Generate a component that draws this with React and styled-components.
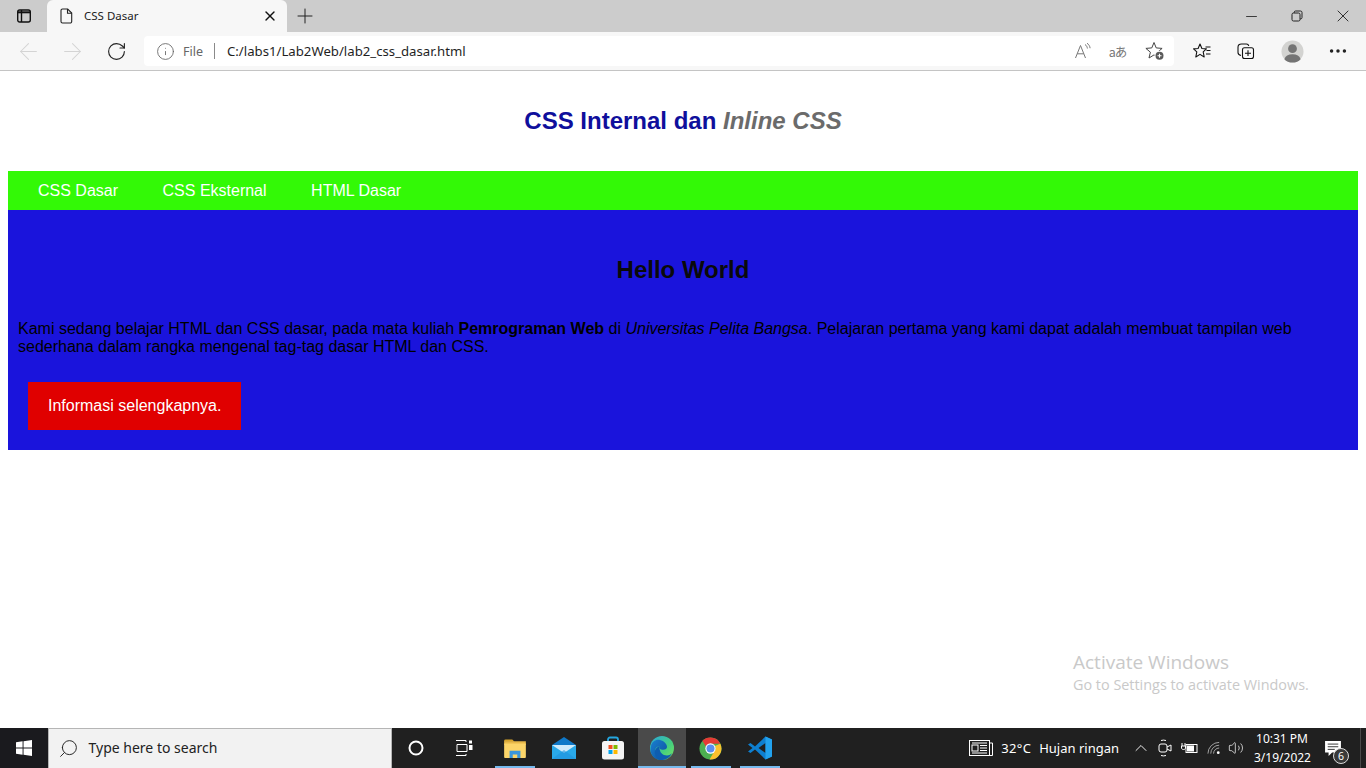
import React from "react";
import styled, { createGlobalStyle } from "styled-components";
import {
  ArrowLeft,
  ArrowRight,
  RotateCw,
  Info,
  X,
  Plus,
  Minus,
  MoreHorizontal,
  Search,
  ChevronUp,
  Volume2,
} from "lucide-react";

const GlobalStyle = createGlobalStyle`
  html, body {
    margin: 0;
    padding: 0;
    height: 100%;
    overflow: hidden;
    background: #fff;
  }
`;

const Screen = styled.div`
  width: 1366px;
  height: 768px;
  display: flex;
  flex-direction: column;
  position: relative;
  overflow: hidden;
  font-family: "Open Sans", "Noto Sans", sans-serif;
`;

/* browser top */
const TabStrip = styled.div`
  height: 32px;
  background: #cccccc;
  display: flex;
  align-items: flex-end;
`;
const TabSide = styled.div`
  width: 47px;
  height: 32px;
  display: flex;
  align-items: center;
  justify-content: center;
`;
const Tab = styled.div`
  width: 240px;
  height: 32px;
  background: #f7f7f7;
  border-radius: 6px 6px 0 0;
  display: flex;
  align-items: center;
  padding: 0 9px 0 13px;
  box-sizing: border-box;
`;
const TabTitle = styled.span`
  flex: 1;
  margin-left: 10px;
  padding-bottom: 2px;
  font-size: 11.5px;
  color: #222;
  font-family: "Noto Sans", sans-serif;
`;
const NewTab = styled.div`
  width: 36px;
  height: 32px;
  display: flex;
  align-items: center;
  justify-content: center;
`;
const WindowControls = styled.div`
  margin-left: auto;
  display: flex;
  height: 32px;
`;
const WinBtn = styled.div`
  width: 46px;
  height: 32px;
  display: flex;
  align-items: center;
  justify-content: center;
`;
const Toolbar = styled.div`
  height: 38px;
  background: #f7f7f7;
  border-bottom: 1px solid #c4c4c4;
  display: flex;
  align-items: center;
  padding-left: 6px;
  box-sizing: content-box;
`;
const NavBtn = styled.div`
  width: 44px;
  height: 32px;
  display: flex;
  align-items: center;
  justify-content: center;
`;
const AddressBar = styled.div`
  width: 1030px;
  height: 30px;
  margin-left: 6px;
  background: #fff;
  border-radius: 4px;
  display: flex;
  align-items: center;
  padding-left: 12px;
  box-sizing: border-box;
`;
const FileLabel = styled.span`
  margin-left: 8px;
  font-size: 12.5px;
  color: #666;
  font-family: "Noto Sans", sans-serif;
`;
const Divider = styled.span`
  width: 1px;
  height: 16px;
  margin: 0 12px 0 11px;
  background: #8a8a8a;
`;
const Url = styled.span`
  flex: 1;
  font-size: 13.2px;
  color: #1f1f1f;
  font-family: "Noto Sans", sans-serif;
`;
const AddressIcons = styled.div`
  display: flex;
  align-items: center;
  padding-right: 1px;
`;
const AddrIcon = styled.div`
  width: 36px;
  height: 30px;
  display: flex;
  align-items: center;
  justify-content: center;
`;
const TranslateGlyph = styled.span`
  font-family: "Noto Sans CJK JP", "Noto Sans", sans-serif;
  font-size: 12.5px;
  letter-spacing: -1px;
  color: #777;
  padding-right: 3px;
`;
const ToolIcons = styled.div`
  display: flex;
  align-items: center;
  padding-left: 6px;
`;
const ToolIcon = styled.div`
  width: ${(p) => p.$w || 44}px;
  height: 32px;
  display: flex;
  align-items: center;
  justify-content: center;
`;

/* page */
const Viewport = styled.div`
  flex: 1;
  padding: 0 8px;
  font-family: "Liberation Sans", Arial, sans-serif;
  font-size: 16px;
  color: #000;
`;
const Header = styled.header`
  height: 100px;
  display: flex;
  align-items: center;
  justify-content: center;
`;
const Title = styled.h1`
  margin: 0;
  font-size: 24px;
  font-weight: bold;
  color: #0f0f9c;
  i {
    color: #6b6b6b;
  }
`;
const Nav = styled.nav`
  height: 39px;
  background: #33f906;
  display: flex;
  align-items: center;
  padding-left: 7.75px;
`;
const NavLink = styled.a`
  color: #fff;
  padding: 0 22.25px;
  line-height: 39px;
`;
const Main = styled.main`
  height: 240px;
  background: #1a14dc;
  padding: 1px 10px 0;
  box-sizing: border-box;
`;
const Hello = styled.h2`
  margin: 45px 0 0;
  text-align: center;
  font-size: 24px;
  line-height: 27px;
  color: #0a0a0a;
`;
const Paragraph = styled.p`
  margin: 37px 0 0;
  line-height: 18px;
`;
const RedButton = styled.a`
  display: inline-block;
  margin: 26px 0 0 10px;
  padding: 0 20px;
  line-height: 48px;
  background: #e00000;
  color: #fff;
`;
const Watermark = styled.div`
  position: absolute;
  left: 1073px;
  top: 650px;
  color: #c9c9c9;
  font-family: "Open Sans", sans-serif;
  font-size: 14.4px;
  line-height: 19px;
  div:first-child {
    font-size: 19px;
    line-height: 25px;
  }
`;

/* taskbar */
const Taskbar = styled.div`
  height: 40px;
  background: #202020;
  display: flex;
  align-items: stretch;
  color: #fff;
`;
const StartBtn = styled.div`
  width: 48px;
  display: flex;
  align-items: center;
  justify-content: center;
  background: #1a1a1e;
`;
const SearchBox = styled.div`
  width: 344px;
  background: #f2f2f2;
  border: 1px solid #b5b5b5;
  border-bottom: none;
  box-sizing: border-box;
  display: flex;
  align-items: center;
  padding-left: 9px;
  color: #222;
  font-size: 14px;
  font-family: "Noto Sans", sans-serif;
  span {
    margin-left: 9.5px;
    padding-bottom: 2px;
  }
`;
const TaskIcon = styled.div`
  width: ${(p) => p.$w || 49}px;
  margin-left: ${(p) => p.$gap || 0}px;
  display: flex;
  align-items: center;
  justify-content: center;
  position: relative;
  background: ${(p) => (p.$active ? "#4a4a4a" : "transparent")};
`;
const RunningBar = styled.span`
  position: absolute;
  bottom: 0;
  left: ${(p) => p.$inset}px;
  right: ${(p) => p.$inset}px;
  height: 2px;
  background: #76b9ed;
`;
const Tray = styled.div`
  margin-left: auto;
  display: flex;
  align-items: center;
  padding-right: 10px;
  position: relative;
  font-family: "Noto Sans", sans-serif;
`;
const DesktopEdge = styled.span`
  position: absolute;
  right: 5px;
  top: 0;
  bottom: 0;
  width: 1px;
  background: #4a4a4a;
`;
const Weather = styled.div`
  display: flex;
  align-items: center;
  font-size: 13px;
  gap: 8px;
  margin-right: 9px;
`;
const Temp = styled.span`
  width: 30px;
  letter-spacing: 0.4px;
  white-space: nowrap;
`;
const TrayIcon = styled.div`
  width: ${(p) => p.$w || 25}px;
  display: flex;
  align-items: center;
  justify-content: center;
`;
const Clock = styled.div`
  width: 56px;
  margin-left: 10px;
  font-size: 12px;
  line-height: 19px;
  text-align: center;
  white-space: nowrap;
`;
const Notify = styled.div`
  width: 46px;
  height: 40px;
  display: flex;
  align-items: center;
  justify-content: center;
  position: relative;
`;
const NotifyBadge = styled.span`
  position: absolute;
  left: 23px;
  top: 20px;
  width: 14px;
  height: 14px;
  border-radius: 50%;
  background: #3a3a3a;
  border: 1px solid #ddd;
  font-size: 10.5px;
  line-height: 14px;
  text-align: center;
  color: #fff;
`;

const TabsIcon = () => (
  <svg width="16" height="16" viewBox="0 0 16 16" fill="none" stroke="#111" strokeWidth="1.4">
    <rect x="1.700" y="2" width="12.600" height="12" rx="2" />
    <path d="M5.500 2v12" />
    <path d="M1.700 4.300h12.600" strokeWidth="2" />
  </svg>
);
const DocIcon = () => (
  <svg width="14" height="16" viewBox="0 0 14 16" fill="none" stroke="#222" strokeWidth="1.1">
    <path d="M2.500 1h5.200l4 4v8.500a1.500 1.500 0 0 1-1.500 1.500H2.500A1.500 1.500 0 0 1 1 13.500v-11A1.500 1.500 0 0 1 2.500 1z" />
    <path d="M7.500 1v4.200h4.200" />
  </svg>
);
const RestoreIcon = () => (
  <svg width="12" height="12" viewBox="0 0 12 12" fill="none" stroke="#222" strokeWidth="1">
    <rect x="1" y="3" width="8" height="8" rx="1.500" />
    <path d="M3.200 3V2.400A1.400 1.400 0 0 1 4.600 1h4.900A1.500 1.500 0 0 1 11 2.500v5a1.400 1.400 0 0 1-1.400 1.400H9" />
  </svg>
);
const ReadAloud = () => (
  <svg width="18" height="18" viewBox="0 0 18 18" fill="none" stroke="#777" strokeWidth="1">
    <path d="M1.500 16 6.500 3.500 11.500 16M3.300 11.800h6.400" />
    <path d="M11 2.500c1.500 1 2.200 2.300 2.400 4M13 1.200c1.800 1.200 2.900 3 3.100 5" />
  </svg>
);
const StarPlus = () => (
  <svg width="20" height="20" viewBox="0 0 20 20">
    <path
      d="M9 1.500 11.200 6.900 17.100 7.400 12.600 11.200 14 17 9 13.900 4 17 5.400 11.200.9 7.400 6.800 6.900z"
      fill="none"
      stroke="#444"
      strokeWidth="1"
      strokeLinejoin="round"
    />
    <circle cx="14.500" cy="14.800" r="5" fill="#fff" />
    <circle cx="14.500" cy="14.800" r="4" fill="#5a5a5a" />
    <path d="M14.500 12.800v4M12.500 14.800h4" stroke="#fff" strokeWidth="1.100" />
  </svg>
);
const FavList = () => (
  <svg width="18" height="18" viewBox="0 0 18 18" fill="none" stroke="#111" strokeWidth="1.100" strokeLinejoin="round">
    <path d="M7 2 8.900 6.500 13.400 6.900 10.200 9.800 11.200 15 7 12.400 2.800 15 3.800 9.800.6 6.900 5.100 6.500z" />
    <path d="M12.500 5h5M13.500 8.500h4M13 12h4.500" />
  </svg>
);
const Collections = () => (
  <svg width="18" height="18" viewBox="0 0 18 18" fill="none" stroke="#111" strokeWidth="1.100">
    <path d="M4 13.500C2 13 1 12 1 10.500V5.200C1 3 2.300 2 4.500 2h5c1.300 0 2 .7 2.300 2" />
    <rect x="5.500" y="5.800" width="11" height="10.700" rx="2" />
    <path d="M11 8.300v5.700M8 11.200h6" />
  </svg>
);
const Avatar = () => (
  <svg width="23" height="23" viewBox="0 0 24 24">
    <circle cx="12" cy="12" r="11.500" fill="#d3d3d1" />
    <circle cx="12" cy="9" r="4.600" fill="#747474" />
    <path d="M3.500 20c1-3.500 4-5.200 8.500-5.200s7.500 1.700 8.500 5.200c-2 2.400-5 3.500-8.500 3.500s-6.500-1.100-8.500-3.500z" fill="#747474" />
  </svg>
);
const WindowsLogo = () => (
  <svg width="16" height="16" viewBox="0 0 17 17" fill="#fff">
    <path d="M0 2.500 7 1.400v6.600H0zM8 1.300 17 0v8H8zM0 9h7v6.600L0 14.500zM8 9h9v8l-9-1.300z" />
  </svg>
);
const CortanaRing = () => (
  <svg width="16" height="16" viewBox="0 0 16 16" fill="none" stroke="#fff" strokeWidth="2">
    <circle cx="8" cy="8" r="6.500" />
  </svg>
);
const TaskView = () => (
  <svg width="18" height="16" viewBox="0 0 18 16" fill="none" stroke="#fff" strokeWidth="1">
    <path d="M1 .5h10v1.500M1 15.500h10V14M2 4.500h10v7H2z" />
    <rect x="14.500" y="1" width="2" height="2" fill="#fff" />
    <rect x="14.500" y="5.500" width="2.500" height="4" fill="#fff" />
  </svg>
);
const Explorer = () => (
  <svg width="22" height="19" viewBox="0 0 24 21">
    <path d="M0 2A1.500 1.500 0 0 1 1.500.5H9L11.500 3H0z" fill="#d8a52c" />
    <rect x="0" y="2.500" width="24" height="4" fill="#e9b949" />
    <path d="M0 5h24v15a1 1 0 0 1-1 1H1a1 1 0 0 1-1-1z" fill="#fcd569" />
    <path d="M6 21v-8h12v8h-3.500v-4h-5v4z" fill="#3a96dd" />
  </svg>
);
const Mail = () => (
  <svg width="24" height="22" viewBox="0 0 24 22">
    <path d="M0 8 12 0l12 8v14H0z" fill="#0f78c8" />
    <path d="M0 8h24v14H0z" fill="#29a9ea" />
    <path d="M0 8l12 8 12-8z" fill="#cfeafa" />
    <path d="M0 22 12 13l12 9z" fill="#1f93dd" opacity="0.6" />
  </svg>
);
const Store = () => (
  <svg width="24" height="24" viewBox="0 0 24 24">
    <path d="M7 7V3.500A2 2 0 0 1 9 1.500h6a2 2 0 0 1 2 2V7" fill="none" stroke="#25a7e0" strokeWidth="1.800" />
    <rect x="1" y="5" width="22" height="18.500" rx="2.500" fill="#f4f4f4" />
    <rect x="7.500" y="9" width="4" height="4" fill="#f25022" />
    <rect x="12.500" y="9" width="4" height="4" fill="#7fba00" />
    <rect x="7.500" y="14" width="4" height="4" fill="#00a4ef" />
    <rect x="12.500" y="14" width="4" height="4" fill="#ffb900" />
  </svg>
);
const Edge = () => (
  <svg width="24" height="24" viewBox="0 0 24 24">
    <defs>
      <linearGradient id="edgeA" x1="0" y1="0" x2="1" y2="1">
        <stop offset="0" stopColor="#2aa7dc" />
        <stop offset="0.6" stopColor="#45d07e" />
        <stop offset="1" stopColor="#7de25e" />
      </linearGradient>
      <linearGradient id="edgeB" x1="0" y1="0" x2="1" y2="1">
        <stop offset="0" stopColor="#1a7fd0" />
        <stop offset="1" stopColor="#0c4f9c" />
      </linearGradient>
    </defs>
    <circle cx="12" cy="12" r="12" fill="url(#edgeA)" />
    <path d="M1 10c1-4.500 5-7 9-6 4 .8 7 4 7 7 0 1.500-1.600 3-4.500 2.800C10 13.500 9 12 9.500 10.500 5 10.500 4 15 6 19c1.500 3 5 5 9 4.600-5 2-12-.5-14-6.600-.7-2.200-.6-4.800 0-7z" fill="url(#edgeB)" />
    <path d="M9.500 12c0 4 3 7.500 7.500 7.500 2 0 4-1 5-2.500-1.500 4-5.500 7-10 7-2 0-5-1-6.500-4.500C3.500 15 6 11 9.500 10.500z" fill="#0e5db0" />
  </svg>
);
const Chrome = () => (
  <svg width="23" height="23" viewBox="0 0 24 24">
    <circle cx="12" cy="12" r="11.500" fill="#4caf50" />
    <path d="M12 .5A11.500 11.500 0 0 1 22.200 7H12a5 5 0 0 0-4.700 3.300L3.500 4A11.500 11.500 0 0 1 12 .5z" fill="#e53935" />
    <path d="M22.200 7A11.500 11.500 0 0 1 11 23.500l4.700-8A5 5 0 0 0 16.500 9.500z" fill="#fbc02d" />
    <circle cx="12" cy="12" r="5.400" fill="#fff" />
    <circle cx="12" cy="12" r="4.200" fill="#5b8def" />
  </svg>
);
const VSCode = () => (
  <svg width="24" height="24" viewBox="0 0 24 24">
    <path d="M17.500.5 24 3.500v17l-6.500 3L7 13.500l-4.500 3.500L0 15.500 4.500 12 0 8.500 2.500 7 7 10.500z" fill="#0e7fd0" />
    <path d="M17.500 7 10.500 12l7 5z" fill="#202020" />
    <path d="M17.500.5 24 3.500v17l-6.500 3z" fill="#22a2ee" />
  </svg>
);
const NewsIcon = () => (
  <svg width="24" height="16" viewBox="0 0 24 16" fill="none" stroke="#fff" strokeWidth="1">
    <rect x="0.500" y="0.500" width="20" height="15" />
    <path d="M20.500 3h3v12.500h-3" />
    <rect x="3" y="5" width="6" height="6" />
    <path d="M3 3h15M11 5.500h7M11 8h7M11 10.500h7M3 13h15" />
  </svg>
);
const MeetIcon = () => (
  <svg width="14" height="18" viewBox="0 0 14 18" fill="none" stroke="#fff" strokeWidth="1">
    <path d="M3 1.500a8 8 0 0 1 5 0M3 16.500a8 8 0 0 0 5 0" />
    <rect x="1" y="5" width="8" height="8" rx="2" />
    <path d="M9 8l4-2v6l-4-2" />
  </svg>
);
const PowerIcon = () => (
  <svg width="17" height="12" viewBox="0 0 17 12" fill="none" stroke="#fff" strokeWidth="1">
    <rect x="5" y="2.500" width="11" height="8" />
    <rect x="6.500" y="4" width="6" height="5" fill="#fff" />
    <path d="M1 1v3M4 1v3M0.500 4h4v2c0 1-1 1.500-2 1.500S.5 7 .5 6z" />
  </svg>
);
const WifiIcon = () => (
  <svg width="15" height="14" viewBox="0 0 16 14" fill="none" stroke="#aaa" strokeWidth="1">
    <path d="M1 13A12 12 0 0 1 13 1M4 13a9 9 0 0 1 9-9M7 13a6 6 0 0 1 6-6" />
    <circle cx="12" cy="12" r="1.500" fill="#fff" stroke="none" />
  </svg>
);
const NotifyIcon = () => (
  <svg width="16" height="15" viewBox="0 0 18 17" fill="#fff">
    <path d="M0 0h18v13H8l-4 4v-4H0z" />
    <path d="M3 3.500h12M3 6.500h12M3 9.500h8" stroke="#202020" strokeWidth="1" />
  </svg>
);

const App = () => {
  const links = ["CSS Dasar", "CSS Eksternal", "HTML Dasar"];
  return (
    <Screen>
      <GlobalStyle />
      <TabStrip>
        <TabSide>
          <TabsIcon />
        </TabSide>
        <Tab>
          <DocIcon />
          <TabTitle>CSS Dasar</TabTitle>
          <X size={16} color="#111" strokeWidth={2} />
        </Tab>
        <NewTab>
          <Plus size={24} color="#222" strokeWidth={1} />
        </NewTab>
        <WindowControls>
          <WinBtn>
            <Minus size={17} color="#222" strokeWidth={1.2} />
          </WinBtn>
          <WinBtn>
            <RestoreIcon />
          </WinBtn>
          <WinBtn>
            <X size={20} color="#222" strokeWidth={1.1} />
          </WinBtn>
        </WindowControls>
      </TabStrip>
      <Toolbar>
        <NavBtn>
          <ArrowLeft size={27} color="#d4d4d4" strokeWidth={0.9} />
        </NavBtn>
        <NavBtn>
          <ArrowRight size={27} color="#d4d4d4" strokeWidth={0.9} />
        </NavBtn>
        <NavBtn>
          <RotateCw size={21} color="#222" strokeWidth={1.3} />
        </NavBtn>
        <AddressBar>
          <Info size={19} color="#666" strokeWidth={1.1} />
          <FileLabel>File</FileLabel>
          <Divider />
          <Url>C:/labs1/Lab2Web/lab2_css_dasar.html</Url>
          <AddressIcons>
            <AddrIcon>
              <ReadAloud />
            </AddrIcon>
            <AddrIcon>
              <TranslateGlyph>aあ</TranslateGlyph>
            </AddrIcon>
            <AddrIcon>
              <StarPlus />
            </AddrIcon>
          </AddressIcons>
        </AddressBar>
        <ToolIcons>
          <ToolIcon>
            <FavList />
          </ToolIcon>
          <ToolIcon>
            <Collections />
          </ToolIcon>
          <ToolIcon $w={48}>
            <Avatar />
          </ToolIcon>
          <ToolIcon>
            <MoreHorizontal size={22} color="#222" strokeWidth={1.8} />
          </ToolIcon>
        </ToolIcons>
      </Toolbar>

      <Viewport>
        <Header>
          <Title>
            CSS Internal dan <i>Inline CSS</i>
          </Title>
        </Header>
        <Nav>
          {links.map((link) => (
            <NavLink key={link}>{link}</NavLink>
          ))}
        </Nav>
        <Main>
          <Hello>Hello World</Hello>
          <Paragraph>
            Kami sedang belajar HTML dan CSS dasar, pada mata kuliah <b>Pemrograman Web</b> di{" "}
            <i>Universitas Pelita Bangsa</i>. Pelajaran pertama yang kami dapat adalah membuat tampilan web
            sederhana dalam rangka mengenal tag-tag dasar HTML dan CSS.
          </Paragraph>
          <RedButton>Informasi selengkapnya.</RedButton>
        </Main>
      </Viewport>

      <Watermark>
        <div>Activate Windows</div>
        <div>Go to Settings to activate Windows.</div>
      </Watermark>

      <Taskbar>
        <StartBtn>
          <WindowsLogo />
        </StartBtn>
        <SearchBox>
          <Search size={21} color="#222" strokeWidth={1.1} style={{ transform: "scaleX(-1)" }} />
          <span>Type here to search</span>
        </SearchBox>
        <TaskIcon $w={48}>
          <CortanaRing />
        </TaskIcon>
        <TaskIcon $w={48}>
          <TaskView />
        </TaskIcon>
        <TaskIcon $gap={2}>
          <Explorer />
          <RunningBar $inset={4.5} />
        </TaskIcon>
        <TaskIcon>
          <Mail />
        </TaskIcon>
        <TaskIcon $w={50}>
          <Store />
        </TaskIcon>
        <TaskIcon $w={48} $active>
          <Edge />
          <RunningBar $inset={0} />
        </TaskIcon>
        <TaskIcon>
          <Chrome />
          <RunningBar $inset={4.5} />
        </TaskIcon>
        <TaskIcon>
          <VSCode />
          <RunningBar $inset={4.5} />
        </TaskIcon>
        <Tray>
          <Weather>
            <NewsIcon />
            <Temp>32°C</Temp>
            <span>Hujan ringan</span>
          </Weather>
          <TrayIcon>
            <ChevronUp size={20} color="#fff" strokeWidth={1.1} />
          </TrayIcon>
          <TrayIcon $w={24}>
            <MeetIcon />
          </TrayIcon>
          <TrayIcon>
            <PowerIcon />
          </TrayIcon>
          <TrayIcon>
            <WifiIcon />
          </TrayIcon>
          <TrayIcon $w={17}>
            <Volume2 size={16} color="#fff" strokeWidth={1.1} />
          </TrayIcon>
          <Clock>
            <div>10:31 PM</div>
            <div>3/19/2022</div>
          </Clock>
          <Notify>
            <NotifyIcon />
            <NotifyBadge>6</NotifyBadge>
          </Notify>
          <DesktopEdge />
        </Tray>
      </Taskbar>
    </Screen>
  );
};

export default App;
